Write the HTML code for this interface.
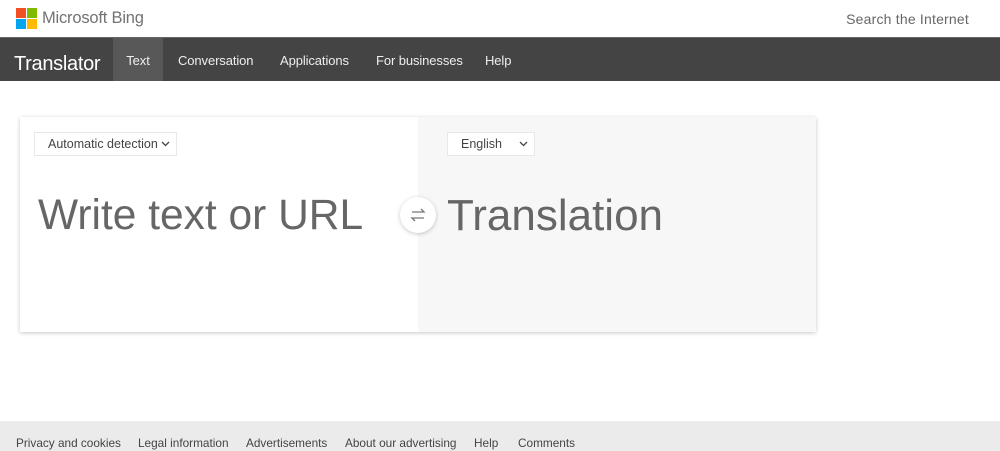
<!DOCTYPE html>
<html><head><style>
*{margin:0;padding:0;box-sizing:border-box}
body{width:1000px;height:451px;background:#fff;font-family:"Liberation Sans",sans-serif;position:relative;overflow:hidden}
.top{height:37px;position:relative}
.logo{position:absolute;left:16px;top:8px;width:21px;height:21px}
.logo i{position:absolute;width:10px;height:10px}
.brand{position:absolute;left:42px;top:9px;font-size:16.5px;color:#737373;letter-spacing:-.2px}
.search{position:absolute;right:31px;top:11px;font-size:14px;color:#666;letter-spacing:.2px}
.nav{position:absolute;top:37px;left:0;width:1000px;height:44px;background:#444;border-top:1px solid #666}
.nav .t{position:absolute;left:14px;top:15px;font-size:20px;color:#fff;letter-spacing:-.3px}
.nav a{position:absolute;top:0;height:43px;line-height:46px;font-size:13px;color:#eee;text-decoration:none;letter-spacing:-.1px}
.card{position:absolute;left:20px;top:117px;width:796px;height:215px;box-shadow:0 1px 4px rgba(0,0,0,.22);background:#fff}
.right{position:absolute;left:398px;top:0;width:398px;height:215px;background:#f7f7f7}
.sel{position:absolute;height:24px;border:1px solid #e8e8e8;background:#fff;font-size:12.5px;color:#444;line-height:22px;padding-left:13px}
.sel svg{position:absolute;right:6px;top:8px}
.big{position:absolute;top:74px;font-size:44px;color:#666}
.swap{position:absolute;left:400px;top:197px;width:36px;height:36px;border-radius:50%;background:#fff;box-shadow:0 1px 4px rgba(0,0,0,.22)}
.foot{position:absolute;top:421px;left:0;width:1000px;height:30px;background:#ebebeb;font-size:11.8px;color:#444}
.foot span{position:absolute;top:15px}
</style></head><body>
<div class="top">
<div class="logo"><i style="left:0;top:0;background:#f25022"></i><i style="left:11px;top:0;background:#7fba00"></i><i style="left:0;top:11px;background:#00a4ef"></i><i style="left:11px;top:11px;background:#ffb900"></i></div>
<div class="brand">Microsoft Bing</div>
<div class="search">Search the Internet</div>
</div>
<div class="nav">
<div class="t">Translator</div>
<a style="left:113px;width:50px;background:#585858;text-align:center">Text</a>
<a style="left:178px">Conversation</a>
<a style="left:280px">Applications</a>
<a style="left:376px">For businesses</a>
<a style="left:485px">Help</a>
</div>
<div class="card">
<div class="right"></div>
<div class="sel" style="left:14px;top:15px;width:143px">Automatic detection<svg width="9" height="6"><path d="M1 1l3.5 3.5L8 1" stroke="#444" fill="none" stroke-width="1.3"/></svg></div>
<div class="sel" style="left:427px;top:15px;width:88px">English<svg width="9" height="6"><path d="M1 1l3.5 3.5L8 1" stroke="#444" fill="none" stroke-width="1.3"/></svg></div>
<div class="big" style="left:18px;font-size:42.5px;top:75px">Write text or URL</div>
<div class="big" style="left:427px">Translation</div>
</div>
<div class="swap"><svg width="36" height="36"><path d="M12 15h12l-3-3M24 21H12l3 3" stroke="#777" fill="none" stroke-width="1.3"/></svg></div>
<div class="foot"><span style="left:16px">Privacy and cookies</span><span style="left:138px">Legal information</span><span style="left:246px">Advertisements</span><span style="left:345px">About our advertising</span><span style="left:474px">Help</span><span style="left:518px">Comments</span></div>
</body></html>
